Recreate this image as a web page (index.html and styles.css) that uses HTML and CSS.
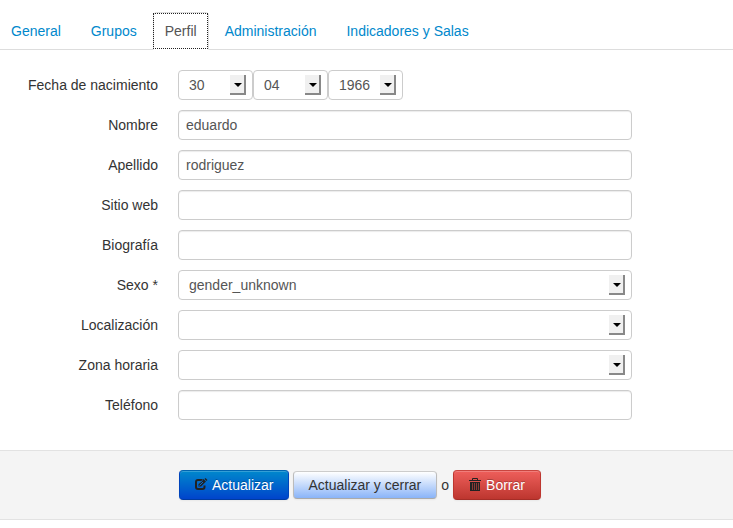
FILE: index.html
```html
<!DOCTYPE html>
<html lang="es">
<head>
<meta charset="utf-8">
<title>Perfil</title>
<link rel="stylesheet" href="styles.css">
</head>
<body>
<nav class="tabs">
  <a class="tab" href="#general">General</a>
  <a class="tab" href="#grupos">Grupos</a>
  <a class="tab active" href="#perfil">Perfil</a>
  <a class="tab" href="#administracion">Administración</a>
  <a class="tab" href="#indicadores">Indicadores y Salas</a>
</nav>
<form class="profile">
  <div class="fields">
    <div class="row">
      <label for="day">Fecha de nacimiento</label>
      <div class="date">
        <span class="select"><select id="day"><option>30</option></select></span>
        <span class="select"><select aria-label="Mes"><option>04</option></select></span>
        <span class="select"><select aria-label="Año"><option>1966</option></select></span>
      </div>
    </div>
    <div class="row"><label for="name">Nombre</label><input id="name" type="text" value="eduardo"></div>
    <div class="row"><label for="surname">Apellido</label><input id="surname" type="text" value="rodriguez"></div>
    <div class="row"><label for="web">Sitio web</label><input id="web" type="text"></div>
    <div class="row"><label for="bio">Biografía</label><input id="bio" type="text"></div>
    <div class="row"><label for="gender">Sexo *</label><span class="select"><select id="gender"><option>gender_unknown</option></select></span></div>
    <div class="row"><label for="locale">Localización</label><span class="select"><select id="locale"><option></option></select></span></div>
    <div class="row"><label for="zone">Zona horaria</label><span class="select"><select id="zone"><option></option></select></span></div>
    <div class="row"><label for="phone">Teléfono</label><input id="phone" type="text"></div>
  </div>
  <div class="actions">
    <button class="btn primary" type="submit"><svg class="icon" viewBox="0 0 14 14" aria-hidden="true"><path d="M8.500 2H4Q2 2 2 4V9Q2 11 4 11H8.500Q10.500 11 10.500 9V7.500" fill="none" stroke="#222" stroke-width="2"/><path d="M4.500 8.500V6L9.500 1L12 3.500L7 8.500Z" fill="#222"/><path d="M10.500 1L11.500 0L13.500 2L12.500 3Z" fill="#222"/><path d="M4.500 5.500L8.500 2.500M5.500 7.500L9 4" fill="none" stroke="#0a6cc8"/></svg>Actualizar</button>
    <button class="btn secondary" type="submit">Actualizar y cerrar</button>
    <span>o</span>
    <button class="btn danger" type="button"><svg class="icon" viewBox="0 0 14 14" aria-hidden="true"><path d="M4.500 2V.5H9.500V2M1 2.500H13" fill="none" stroke="#222"/><path d="M2 4H12V13H2Z" fill="#222"/><path d="M4.500 5V12M6.500 5V12M8.500 5V12M10.500 5V12" stroke="#8b3935" stroke-width="1"/></svg>Borrar</button>
  </div>
</form>
</body>
</html>
```
FILE: styles.css
```css
*, ::before, ::after { box-sizing: border-box; }
body {
  margin: 0;
  background: #fff;
  color: #333;
  font: 14px/20px "Liberation Sans", Arial, sans-serif;
}
.tabs {
  display: flex;
  gap: 2px;
  padding-top: 12px;
  border-bottom: 1px solid #ddd;
}
.tab {
  margin-bottom: -1px;
  padding: 8px 13px;
  border: 1px solid transparent;
  border-radius: 4px 4px 0 0;
  color: #08c;
  text-decoration: none;
}
.tab:first-child { padding-left: 10px; }
.tab.active {
  position: relative;
  padding: 8px 11px;
  border-color: #ddd;
  border-bottom-color: #fff;
  background: #fff;
  color: #555;
}
.tab.active::after {
  content: "";
  position: absolute;
  inset: 0 0 0 -1px;
  border: 1px dotted #222;
}
.fields {
  display: grid;
  gap: 10px;
  padding: 20px 101px 30px 0;
}
.row {
  display: grid;
  grid-template-columns: 158px 1fr;
  column-gap: 20px;
  align-items: center;
}
label { text-align: right; }
input, select {
  display: block;
  width: 100%;
  height: 30px;
  margin: 0;
  border: 1px solid #ccc;
  border-radius: 4px;
  background: #fff;
  color: #555;
  font: inherit;
}
input {
  padding: 4px 7px;
  box-shadow: inset 0 1px 1px rgba(0, 0, 0, .08);
}
select {
  appearance: none;
  padding: 4px 10px;
}
.date { display: flex; }
.date .select { width: 75px; }
.select {
  display: block;
  position: relative;
}
.select::before {
  content: "";
  position: absolute;
  top: 5px;
  right: 7px;
  width: 16px;
  height: 20px;
  border: solid #888;
  border-width: 0 2px 2px 0;
  background: #f0f0f0;
  pointer-events: none;
}
.select::after {
  content: "";
  position: absolute;
  top: 13px;
  right: 11px;
  border: solid transparent;
  border-width: 4px 4px 0;
  border-top-color: #000;
  pointer-events: none;
}
.actions {
  display: flex;
  align-items: center;
  gap: 4px;
  padding: 19px 20px 19px 179px;
  border: solid #e2e2e2;
  border-width: 1px 0;
  background: #f4f4f4;
}
.btn {
  display: flex;
  align-items: center;
  gap: 4px;
  height: 30px;
  padding: 0 15px 0 14px;
  border: 1px solid;
  border-radius: 4px;
  font: inherit;
  white-space: nowrap;
  box-shadow: inset 0 1px 0 rgba(255, 255, 255, .2), 0 1px 2px rgba(0, 0, 0, .05);
}
.icon { width: 14px; height: 14px; }
.primary {
  border-color: #0064b0 #04b #003ba0;
  background: linear-gradient(#08c, #04c);
  color: #fff;
  text-shadow: 0 -1px 0 rgba(0, 0, 0, .25);
}
.secondary {
  height: 28px;
  border-color: #ccc #bbb #aaa;
  background: linear-gradient(#fff, #8ab4f8);
  color: #333;
}
.danger {
  border-color: #c9453f #bd362f #a52d27;
  background: linear-gradient(#ee5f5b, #bd362f);
  color: #fff;
  text-shadow: 0 -1px 0 rgba(0, 0, 0, .25);
}
```
